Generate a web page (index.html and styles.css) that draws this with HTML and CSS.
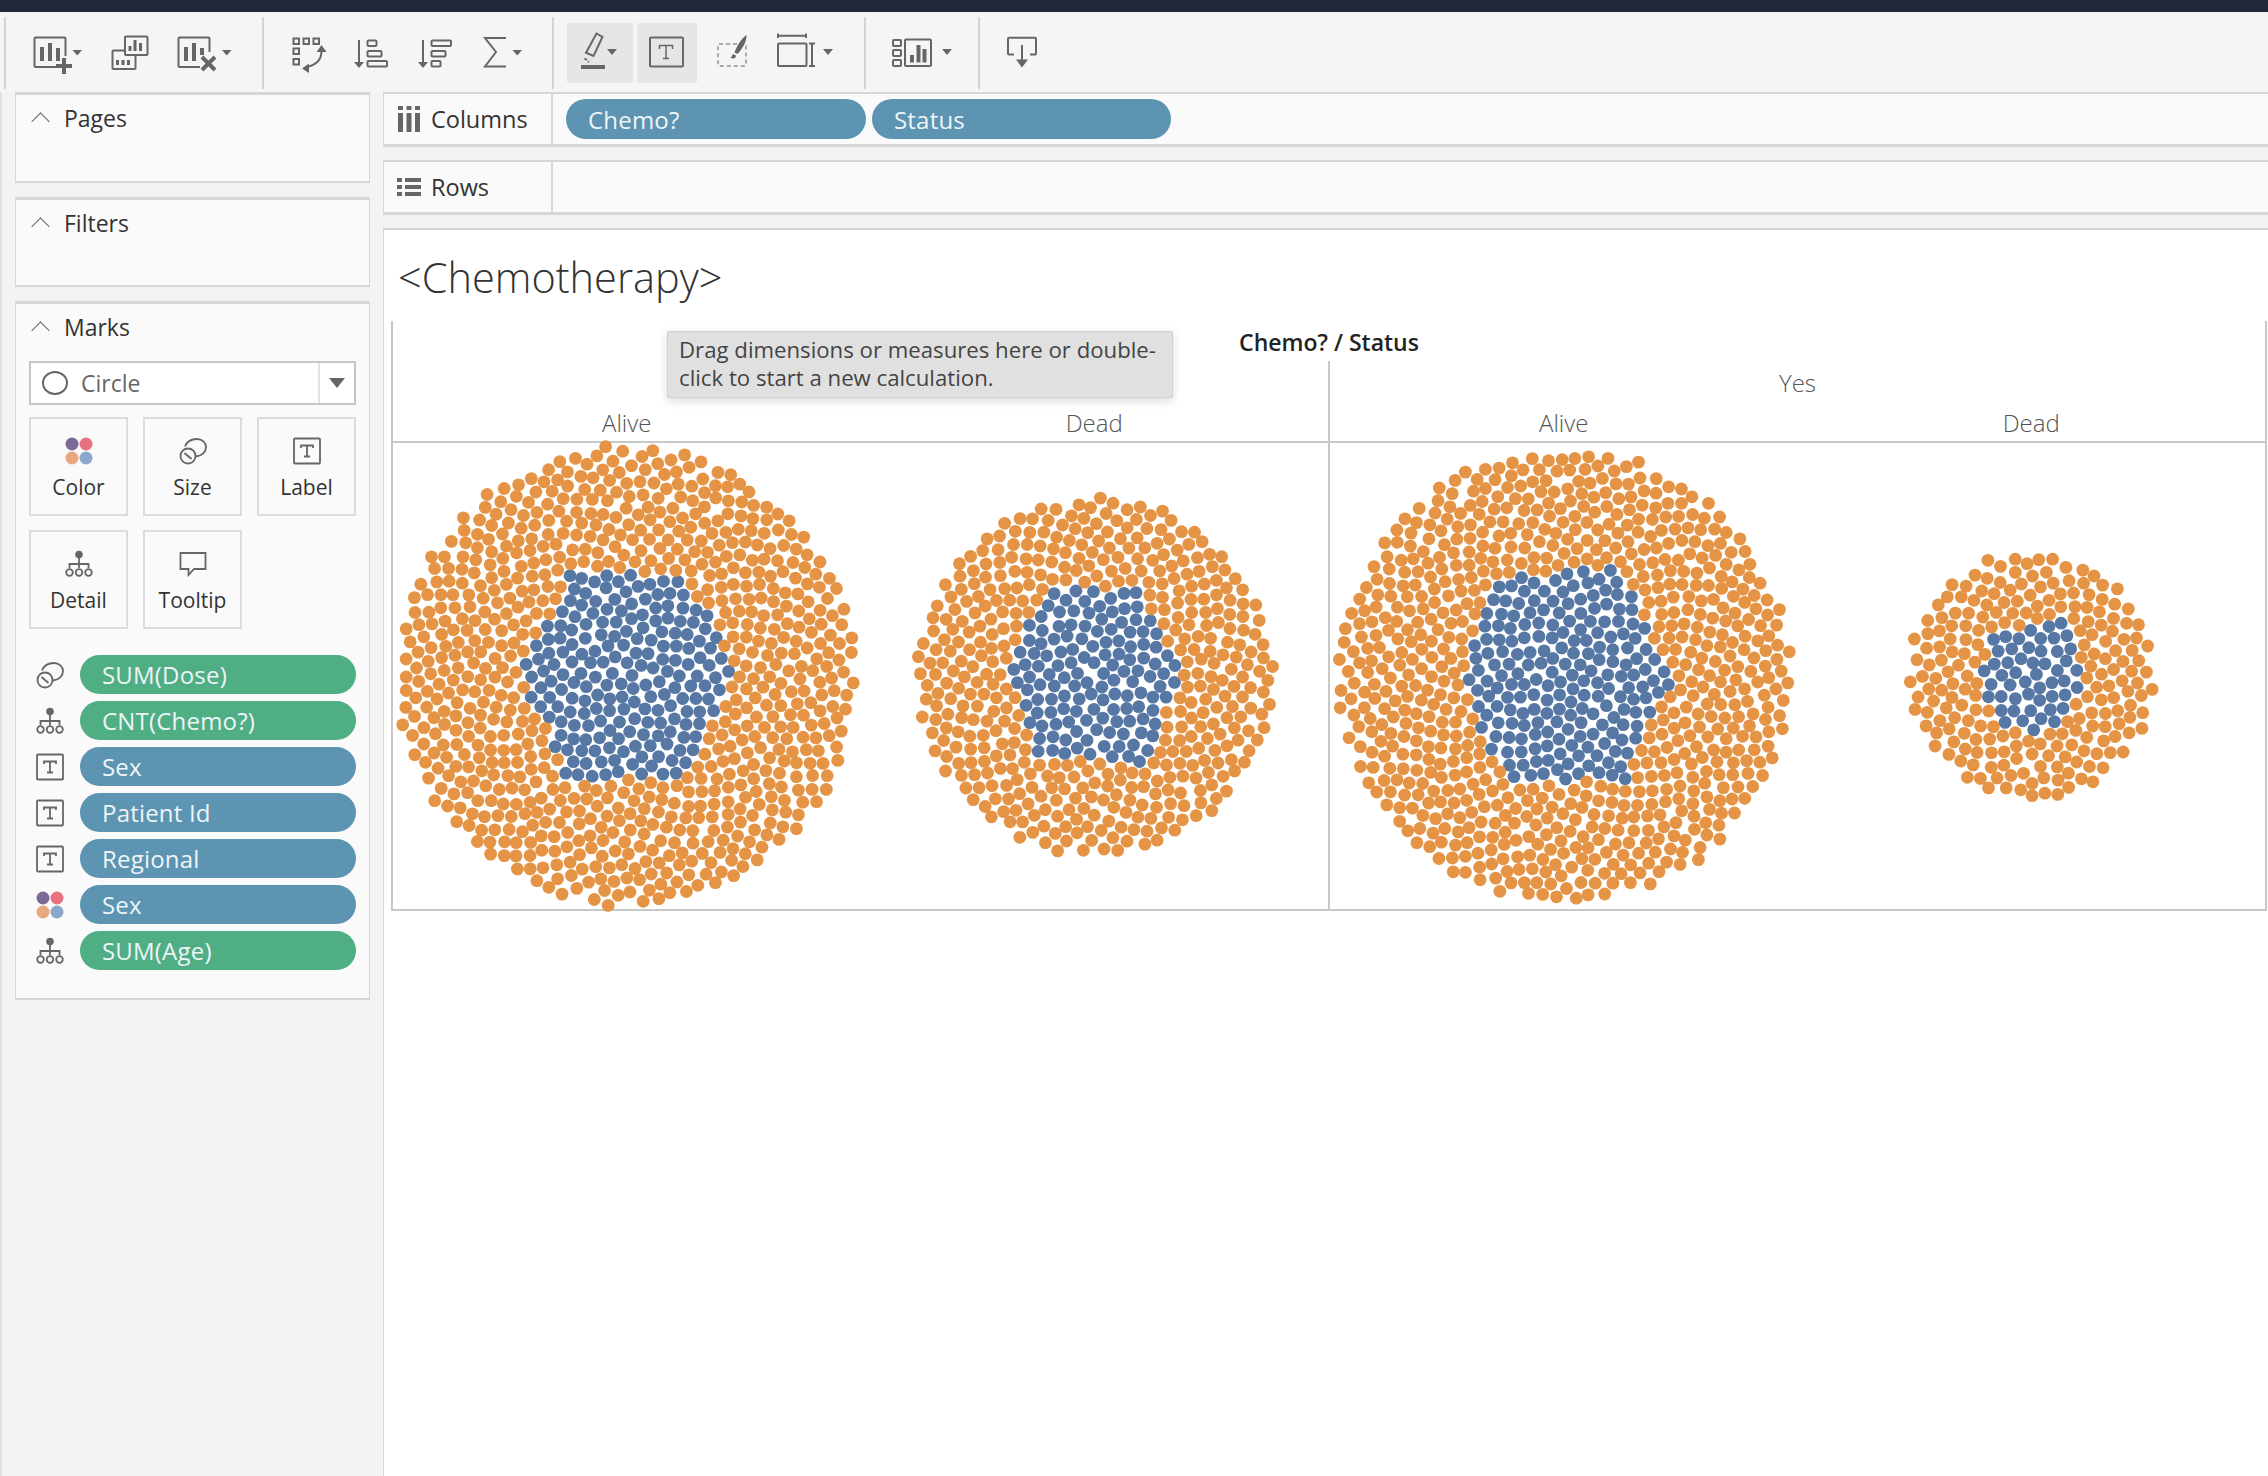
FILE: index.html
```html
<!DOCTYPE html>
<html>
<head>
<meta charset="utf-8">
<title>Chemotherapy</title>
<link rel="stylesheet" href="styles.css">
</head>
<body>

<svg class="sprite">
  <symbol id="i-color" viewBox="0 0 28 28">
    <circle cx="7" cy="7" r="6.5" fill="#7b6a96" stroke="none"/><circle cx="21" cy="7" r="6.5" fill="#e8727e" stroke="none"/>
    <circle cx="7" cy="21" r="6.5" fill="#e9a77e" stroke="none"/><circle cx="21" cy="21" r="6.5" fill="#8ba8cc" stroke="none"/>
  </symbol>
  <symbol id="i-size" viewBox="0 0 28 28">
    <path d="M6 9.5C8 4.500 13 2 18 2c5 0 9 3.500 9 8 0 5-4 9-10 9.500"/>
    <circle cx="9" cy="19" r="7.500"/><path d="M5.500 16l7 6"/>
  </symbol>
  <symbol id="i-text" viewBox="0 0 28 28">
    <rect x="1" y="1.500" width="26" height="25" rx="1"/>
    <path d="M8 11V8.500h12V11M14 8.500v11M11 19.500h6"/>
  </symbol>
  <symbol id="i-detail" viewBox="0 0 28 28">
    <circle cx="14" cy="4.500" r="3.800" fill="#666" stroke="none"/>
    <path d="M14 8v6M4.500 18v-4h19v4M14 14v4"/>
    <circle cx="4.500" cy="22.500" r="3.300"/><circle cx="14" cy="22.500" r="3.300"/><circle cx="23.500" cy="22.500" r="3.300"/>
  </symbol>
  <symbol id="i-tooltip" viewBox="0 0 28 28">
    <path d="M1.500 3h25v16H15l-5.500 6v-6h-8z"/>
  </symbol>
</svg>

<div class="topbar"></div>

<div class="toolbar">
  <div class="tool-group tool-group-1">
    <svg class="tool" width="66" height="60" viewBox="25 23 66 60">
      <path class="ln" d="M58 67H35.500a1 1 0 0 1-1-1V38.500a1 1 0 0 1 1-1h29a1 1 0 0 1 1 1V56"/>
      <path class="fl" d="M40 47h4v14h-4zM48 43h4v18h-4zM56 48h4v13h-4zM62 58h4v6h6v4h-6v6h-4v-6h-6v-4h6z"/>
      <path class="fl" d="M72.500 50H82l-4.750 5.600z"/>
    </svg>
    <svg class="tool" width="70" height="60" viewBox="95 23 70 60">
      <rect class="ln" x="125" y="36.500" width="22.500" height="18.500" rx="1"/>
      <path class="ln" d="M125 50.500h-11.500a1 1 0 0 0-1 1V68a1 1 0 0 0 1 1h21a1 1 0 0 0 1-1V55"/>
      <path class="fl" d="M128.500 46h3v5h-3zM133.500 40h3v11h-3zM139 43h3v8h-3zM116 60h3v5h-3zM121.500 60h3v5h-3zM127 60h3v5h-3z"/>
    </svg>
    <svg class="tool" width="70" height="60" viewBox="169 23 70 60">
      <path class="ln" d="M200 67h-20.500a1 1 0 0 1-1-1V38.500a1 1 0 0 1 1-1h29a1 1 0 0 1 1 1V52"/>
      <path class="fl" d="M184 47h4v14h-4zM192 43h4v18h-4zM200 48h4v7h-4z"/>
      <path class="ln ln-heavy" d="M202 57l13 13M215 57l-13 13"/>
      <path class="fl" d="M222 50h9.500l-4.750 5.600z"/>
    </svg>
  </div>
  <div class="tool-group tool-group-2">
    <svg class="tool" width="58" height="60" viewBox="283 23 58 60">
      <rect class="ln" x="293.500" y="38.500" width="5.500" height="5.500"/><rect class="ln" x="303.500" y="38.500" width="5.500" height="5.500"/><rect class="ln" x="313.500" y="38.500" width="5.500" height="5.500"/>
      <rect class="ln" x="293.500" y="48.500" width="5.500" height="5.500"/><rect class="ln" x="293.500" y="59" width="5.500" height="5.500"/>
      <path class="ln" d="M321.500 51c0 8-5 14-15 16"/>
      <path class="fl" d="M321.500 45l5 7h-10zM302 68.500l7-5v9.500z"/>
    </svg>
    <svg class="tool" width="56" height="60" viewBox="345 23 56 60">
      <path class="ln" d="M359 40v22"/><path class="fl" d="M354 62h10l-5 6z"/>
      <rect class="ln" x="367.500" y="40.500" width="9" height="5.500" rx="1"/><rect class="ln" x="367.500" y="51" width="14" height="5.500" rx="1"/><rect class="ln" x="367.500" y="61" width="19.500" height="5.500" rx="1"/>
    </svg>
    <svg class="tool" width="60" height="60" viewBox="405 23 60 60">
      <path class="ln" d="M423 40v22"/><path class="fl" d="M418 62h10l-5 6z"/>
      <rect class="ln" x="431.500" y="40.500" width="19.500" height="5.500" rx="1"/><rect class="ln" x="431.500" y="51" width="14" height="5.500" rx="1"/><rect class="ln" x="431.500" y="61" width="9" height="5.500" rx="1"/>
    </svg>
    <svg class="tool" width="62" height="60" viewBox="469 23 62 60">
      <path class="ln" d="M506 38H485l11 14-11 14.500h21"/>
      <path class="fl" d="M512.500 50h9.500l-4.750 5.600z"/>
    </svg>
  </div>
  <div class="tool-group tool-group-3">
    <svg class="tool tool-on" width="66" height="60" viewBox="568 23 66 60">
      <path class="ln" d="M597.500 33.500l6 3.400-9 19.100-7.500-3.300zM585.500 58.500l2.500 1.500M589 61.500l1 .8"/>
      <path class="fl" d="M582 65h24v4h-24zM608 49h10l-5 6z"/>
    </svg>
    <svg class="tool tool-on" width="60" height="60" viewBox="638 23 60 60">
      <rect class="ln" x="651" y="37.500" width="33" height="29" rx="1"/>
      <path class="ln ln-thin" d="M660.500 49v-3.500h13V49M667 45.500v13M664 58.500h6"/>
    </svg>
    <svg class="tool" width="62" height="60" viewBox="702 23 62 60">
      <rect class="ln ln-dash" x="719" y="44" width="28" height="22" rx="1"/>
      <path class="fl" d="M747.500 35c.5 6-4 14-9 19l-3-1.500c2-6 7-14 12-17.500zM734 54l3 1.500c0 2.500-2 3.500-5.500 2.500 1.500-1 1.500-3 2.500-4z"/>
    </svg>
    <svg class="tool" width="68" height="60" viewBox="768 23 68 60">
      <path class="ln" d="M779 33.500v4.500M779 35.700h28M807 33.500v4.500"/>
      <rect class="ln" x="779" y="43.500" width="28.500" height="22.500" rx="1"/>
      <path class="ln" d="M810 43.500h6M813 43.500v22.500M810 66h6"/>
      <path class="fl" d="M824 49h10l-5 6z"/>
    </svg>
  </div>
  <div class="tool-group tool-group-4">
    <svg class="tool" width="80" height="60" viewBox="882 23 80 60">
      <rect class="ln" x="893" y="40" width="8" height="6" rx="1"/><rect class="ln" x="893" y="50" width="8" height="6" rx="1"/><rect class="ln" x="893" y="60" width="8" height="6" rx="1"/>
      <rect class="ln" x="905" y="39.500" width="26" height="26.500" rx="1"/>
      <path class="fl" d="M910 55h4v7.500h-4zM916.500 45h4v17.500h-4zM922.500 49h4v13.500h-4zM942 49h10l-5 6z"/>
    </svg>
  </div>
  <div class="tool-group tool-group-5">
    <svg class="tool" width="50" height="60" viewBox="998 23 50 60">
      <path class="ln" d="M1015 54.500h-5a1 1 0 0 1-1-1V38.700a1 1 0 0 1 1-1h26a1 1 0 0 1 1 1v14.800a1 1 0 0 1-1 1h-5M1023 45v15"/>
      <path class="fl" d="M1017 59.500h12l-6 8z"/>
    </svg>
  </div>
</div>

<div class="main">
  <div class="side">
    <div class="panel panel-short">
      <div class="panel-title"><span class="chev"></span>Pages</div>
    </div>
    <div class="panel panel-short">
      <div class="panel-title"><span class="chev"></span>Filters</div>
    </div>
    <div class="panel panel-marks">
      <div class="panel-title"><span class="chev"></span>Marks</div>
      <div class="mark-select">
        <span class="mark-circle"></span>
        <span class="mark-name">Circle</span>
        <span class="mark-arrow"></span>
      </div>
      <div class="cards">
        <div class="card"><svg class="ico"><use href="#i-color"/></svg>Color</div>
        <div class="card"><svg class="ico"><use href="#i-size"/></svg>Size</div>
        <div class="card"><svg class="ico"><use href="#i-text"/></svg>Label</div>
        <div class="card"><svg class="ico"><use href="#i-detail"/></svg>Detail</div>
        <div class="card"><svg class="ico"><use href="#i-tooltip"/></svg>Tooltip</div>
      </div>
      <div class="mark-fields">
        <div class="field"><svg class="ico"><use href="#i-size"/></svg><span class="pill pill-green">SUM(Dose)</span></div>
        <div class="field"><svg class="ico"><use href="#i-detail"/></svg><span class="pill pill-green">CNT(Chemo?)</span></div>
        <div class="field"><svg class="ico"><use href="#i-text"/></svg><span class="pill pill-blue">Sex</span></div>
        <div class="field"><svg class="ico"><use href="#i-text"/></svg><span class="pill pill-blue">Patient Id</span></div>
        <div class="field"><svg class="ico"><use href="#i-text"/></svg><span class="pill pill-blue">Regional</span></div>
        <div class="field"><svg class="ico"><use href="#i-color"/></svg><span class="pill pill-blue">Sex</span></div>
        <div class="field"><svg class="ico"><use href="#i-detail"/></svg><span class="pill pill-green">SUM(Age)</span></div>
      </div>
    </div>
  </div>

  <div class="content">
    <div class="shelf">
      <div class="shelf-label">
        <svg class="shelf-ico" width="24" height="26" viewBox="0 0 24 26"><path class="fl" d="M1 7h5v19H1zM9.500 7h5v19h-5zM18 7h5v19h-5zM1 0h5v4H1zM9.500 0h5v4h-5zM18 0h5v4h-5z"/></svg>
        Columns
      </div>
      <div class="shelf-pills">
        <span class="pill pill-blue pill-shelf">Chemo?</span>
        <span class="pill pill-blue pill-shelf">Status</span>
      </div>
    </div>
    <div class="shelf">
      <div class="shelf-label">
        <svg class="shelf-ico" width="24" height="26" viewBox="0 0 24 26"><path class="fl" d="M0 4h5v4H0zM8 4h16v4H8zM0 11h5v4H0zM8 11h16v4H8zM0 18h5v4H0zM8 18h16v4H8z"/></svg>
        Rows
      </div>
      <div class="shelf-pills"></div>
    </div>

    <div class="view">
      <div class="view-title">&lt;Chemotherapy&gt;</div>
      <div class="chart">
        <div class="chart-title">Chemo? / Status</div>
        <div class="chart-head">
          <div class="head-pane">
            <div class="head-top"></div>
            <div class="head-sub"><span>Alive</span><span>Dead</span></div>
          </div>
          <div class="head-pane">
            <div class="head-top">Yes</div>
            <div class="head-sub"><span>Alive</span><span>Dead</span></div>
          </div>
        </div>
        <div class="plot">
          <div class="plot-pane">
            <svg class="bubbles" data-outer="228" data-inner="106" data-seed="11"></svg>
            <svg class="bubbles" data-outer="178" data-inner="88" data-seed="23"></svg>
          </div>
          <div class="plot-pane">
            <svg class="bubbles" data-outer="225" data-inner="107" data-seed="37"></svg>
            <svg class="bubbles" data-outer="122" data-inner="54" data-seed="51"></svg>
          </div>
        </div>
      </div>
      <div class="hint">Drag dimensions or measures here or double-click to start a new calculation.</div>
    </div>
  </div>
</div>

<script src="script.js"></script>
</body>
</html>
```

FILE: styles.css
```css
body {
  margin: 0;
  height: 1476px;
  overflow: hidden;
  background: #f3f3f3;
  color: #333;
  font-family: "Open Sans", sans-serif;
  font-size: 23px;
}

.sprite { display: none; }

.topbar { height: 12px; background: #22273a; }

/* toolbar */
.toolbar { display: flex; height: 80px; background: #f5f5f5; }
.tool-group {
  display: flex;
  gap: 4px;
  height: 72px;
  margin-top: 5px;
  border-left: 2px solid #d4d4d4;
  box-sizing: border-box;
}
.tool-group-1 { margin-left: 4px; width: 258px; padding-left: 19px; }
.tool-group-2 { width: 290px; padding-left: 19px; }
.tool-group-3 { width: 312px; padding-left: 13px; }
.tool-group-4 { width: 114px; padding-left: 16px; }
.tool-group-5 { padding-left: 17px; }
.tool { margin-top: 6px; border-radius: 2px; }
.tool-on { background: #e6e6e6; }

.ln { fill: none; stroke: #666; stroke-width: 2; }
.ln-heavy { stroke-width: 4; }
.ln-thin { stroke-width: 1.500; }
.ln-dash { stroke: #aaa; stroke-dasharray: 4 3; }
.fl { fill: #666; }

.main { display: flex; height: 1384px; }

/* left side */
.side {
  display: flex;
  flex: none;
  flex-direction: column;
  gap: 14px;
  width: 383px;
  padding: 0 13px 0 14px;
  box-sizing: border-box;
  border-left: 2px solid #e2e2e2;
}
.panel {
  background: #fafafa;
  border: 2px solid #d6d6d6;
  border-width: 3px 1px 2px 1px;
  box-sizing: border-box;
  margin-left: -1px;
}
.panel-short { height: 90.500px; }
.panel-marks { height: 699px; padding: 0 13px; }
.panel-title {
  display: flex;
  align-items: center;
  height: 46px;
  padding-left: 18px;
  color: #333;
}
.panel-marks .panel-title { padding: 0 0 8px 5px; height: 54px; box-sizing: border-box; }
.chev {
  width: 12px;
  height: 12px;
  margin: 7px 17px 0 0;
  border-left: 1.500px solid #666;
  border-top: 1.500px solid #666;
  transform: rotate(45deg);
}

.mark-select {
  display: flex;
  align-items: center;
  height: 44px;
  border: 2px solid #c6c6c6;
  box-sizing: border-box;
  background: #fff;
  margin-top: 3px;
}
.mark-circle { width: 22px; height: 20px; margin-left: 11px; border: 2px solid #666; border-radius: 50%; }
.mark-name { flex: 1; margin-left: 13px; color: #666; }
.mark-arrow {
  display: flex;
  align-items: center;
  justify-content: center;
  width: 34px;
  height: 40px;
  border-left: 2px solid #e2e2e2;
}
.mark-arrow::after {
  content: "";
  border: 8px solid transparent;
  border-top: 10px solid #666;
  border-bottom: 0;
}

.cards { display: grid; grid-template-columns: repeat(3, 99px); justify-content: space-between; row-gap: 14px; margin-top: 12px; }
.card {
  display: flex;
  flex-direction: column;
  align-items: center;
  height: 99px;
  padding-top: 18px;
  box-sizing: border-box;
  border: 2px solid #dcdcdc;
  font-size: 21px;
  line-height: 36px;
  background: #fafafa;
}
.card .ico { margin-bottom: 4px; }
.ico { width: 28px; height: 28px; flex: none; fill: none; stroke: #666; stroke-width: 1.800; }

.mark-fields { display: flex; flex-direction: column; gap: 7px; margin-top: 26px; }
.field { display: flex; align-items: center; gap: 16px; padding-left: 7px; }
.pill {
  flex: 1;
  height: 39px;
  padding-left: 22px;
  box-sizing: border-box;
  border-radius: 20px;
  color: #eef4f7;
  line-height: 39px;
  font-size: 24px;
  letter-spacing: .2px;
}
.pill-green { background: #4fae84; }
.pill-blue { background: #5c94b2; }

/* shelves */
.content { flex: 1; display: flex; flex-direction: column; min-width: 0; }
.shelf {
  display: flex;
  height: 55px;
  margin-bottom: 13px;
  background: #fafafa;
  border: 2px solid #d6d6d6;
  border-width: 2px 0 3px 1px;
  box-sizing: border-box;
}
.shelf-label {
  display: flex;
  align-items: center;
  gap: 10px;
  width: 169px;
  padding-left: 13px;
  box-sizing: border-box;
  border-right: 2px solid #d6d6d6;
  font-size: 23.500px;
}
.shelf-pills { display: flex; align-items: center; gap: 6px; padding-left: 13px; }
.pill-shelf { flex: none; width: 300px; height: 40px; line-height: 42px; border-radius: 20px; }
.pill-shelf + .pill-shelf { width: 299px; }
.shelf-ico { flex: none; }

/* view */
.view {
  position: relative;
  flex: 1;
  background: #fff;
  border: 2px solid #d6d6d6;
  border-width: 2px 0 0 1px;
}
.view-title {
  height: 91px;
  padding: 20px 0 0 14px;
  box-sizing: border-box;
  font-size: 41.500px;
  font-weight: 300;
  color: #333;
  line-height: 54px;
}
.chart {
  margin: 0 0 0 7px;
  width: 1876px;
  height: 590px;
  box-sizing: border-box;
  border: 2px solid #c8c8c8;
  border-width: 0 2px 2px 2px;
  display: flex;
  flex-direction: column;
}
.chart-title { height: 40px; line-height: 43px; text-align: center; font-weight: 600; font-size: 23px; color: #222; }
.chart-head { display: flex; height: 80px; border-bottom: 2px solid #c8c8c8; color: #555; font-size: 24px; font-weight: 300; }
.head-pane { flex: 1; }
.head-pane + .head-pane { border-left: 2px solid #c8c8c8; }
.head-top { height: 40px; line-height: 44px; text-align: center; }
.head-sub { display: flex; line-height: 44px; text-align: center; }
.head-sub span { flex: 1; }
.plot { flex: 1; display: flex; }
.plot-pane { flex: 1; display: flex; }
.plot-pane + .plot-pane { border-left: 2px solid #c8c8c8; }
.bubbles { flex: 1; height: 100%; min-width: 0; overflow: visible; }

.hint {
  position: absolute;
  left: 283px;
  top: 101px;
  width: 506px;
  height: 67px;
  padding: 4px 11px;
  box-sizing: border-box;
  background: #e0e0e0;
  border-radius: 2px;
  border: 1px solid #d0d0d0;
  box-shadow: 0 3px 10px rgba(0, 0, 0, .15);
  color: #444;
  font-size: 22.200px;
  line-height: 28px;
}
```

FILE: script.js
```js
// packed bubbles: scatter the marks, push them apart, then colour the six sided middle
var GAP = 13.2;

function seeded(s) {
  return function () {
    s = (s * 16807) % 2147483647;
    return s / 2147483647;
  };
}

// distance measure for a hexagon with points to the left and right
function hexDist(x, y) {
  var ax = Math.abs(x), ay = Math.abs(y);
  return Math.max(ay / 0.97, ax + ay * 0.45);
}

function edge(outer, a, wob) {
  return outer * (1 + 0.025 * Math.sin(6 * a + wob) + 0.015 * Math.sin(11 * a + wob * 2));
}

function relax(pts, outer, wob) {
  for (var it = 0; it < 40; it++) {
    for (var i = 0; i < pts.length; i++) {
      for (var j = i + 1; j < pts.length; j++) {
        var dx = pts[j][0] - pts[i][0];
        var dy = pts[j][1] - pts[i][1];
        if (Math.abs(dx) > GAP || Math.abs(dy) > GAP) continue;
        var d = Math.sqrt(dx * dx + dy * dy) || 0.01;
        if (d < GAP) {
          var push = (GAP - d) / d * 0.5;
          pts[i][0] -= dx * push; pts[i][1] -= dy * push;
          pts[j][0] += dx * push; pts[j][1] += dy * push;
        }
      }
      var a = Math.atan2(pts[i][1], pts[i][0]);
      var r = Math.sqrt(pts[i][0] * pts[i][0] + pts[i][1] * pts[i][1]);
      var max = edge(outer, a, wob);
      if (r > max) {
        pts[i][0] *= max / r;
        pts[i][1] *= max / r;
      }
    }
  }
}

document.querySelectorAll('.bubbles').forEach(function (svg) {
  var outer = +svg.dataset.outer;
  var inner = +svg.dataset.inner;
  var rand = seeded(+svg.dataset.seed * 7919);
  var w = svg.clientWidth || 468;
  var h = svg.clientHeight || 466;
  var wob = rand() * 6;
  var count = Math.round(0.78 * outer * outer / (GAP * GAP / 4));
  var pts = [];

  // sunflower scatter so the marks start evenly spread
  for (var n = 0; n < count; n++) {
    var r = outer * Math.sqrt((n + 0.5) / count);
    var a = n * 2.39996;
    pts.push([r * Math.cos(a) + (rand() - 0.5) * 8, r * Math.sin(a) + (rand() - 0.5) * 8]);
  }
  relax(pts, outer, wob);

  var out = '';
  pts.forEach(function (p) {
    var a = Math.atan2(p[1], p[0]);
    var blue = hexDist(p[0], p[1]) < inner * (1 + 0.03 * Math.sin(5 * a + wob));
    var x = w / 2 + p[0] + (rand() - 0.5) * 1.6;
    var y = h / 2 + p[1] + (rand() - 0.5) * 1.6;
    out += '<circle cx="' + x.toFixed(1) + '" cy="' + y.toFixed(1) + '" r="6.4" fill="' + (blue ? '#5778a4' : '#e49444') + '"/>';
  });
  svg.innerHTML = out;
});
```
